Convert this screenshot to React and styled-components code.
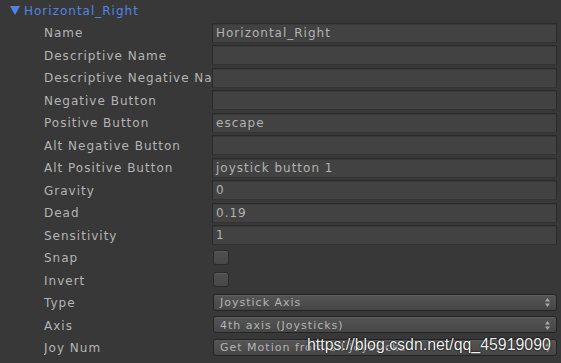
import React from 'react'
import styled, { createGlobalStyle } from 'styled-components'

const Global = createGlobalStyle`
  html, body {
    margin: 0;
    padding: 0;
    background: #383838;
  }
  body {
    font-family: "DejaVu Sans", "Liberation Sans", sans-serif;
  }
`

const Panel = styled.div`
  position: relative;
  width: 561px;
  height: 363px;
  overflow: hidden;
  background: #383838;
`

const Header = styled.div`
  height: 21px;
  display: flex;
  align-items: center;
  padding-left: 10px;
  color: #5284e6;
  font-size: 12px;
  letter-spacing: 1px;
`

const Arrow = styled.span`
  width: 0;
  height: 0;
  border-left: 5.5px solid transparent;
  border-right: 5.5px solid transparent;
  border-top: 9px solid #5284e6;
  margin-right: 4px;
`

const Row = styled.div`
  height: 22.5px;
  display: grid;
  grid-template-columns: 168px 1fr;
  align-items: center;
  padding-left: 44px;
  padding-right: 4px;
`

const Label = styled.div`
  padding-top: 2px;
  color: #b4b4b4;
  font-size: 12px;
  letter-spacing: 1px;
  white-space: nowrap;
  overflow: hidden;
`

const Field = styled.div`
  box-sizing: border-box;
  height: 20px;
  margin-top: 1px;
  background: #424242;
  border: 1px solid #2b2b2b;
  border-bottom-color: #333;
  box-shadow: inset 0 1px 0 #3a3a3a;
  color: #b2b2b2;
  font-size: 12px;
  letter-spacing: 1px;
  line-height: 19px;
  padding-left: 3px;
  white-space: nowrap;
  overflow: hidden;
`

const Check = styled.div`
  box-sizing: border-box;
  width: 16px;
  height: 15px;
  margin-left: 1px;
  border-radius: 3px;
  border: 1px solid #2a2a2a;
  background: linear-gradient(#505050, #474747);
  box-shadow: inset 0 1px 0 #5a5a5a;
`

const Select = styled.div`
  box-sizing: border-box;
  height: 17px;
  margin-left: 1px;
  display: flex;
  align-items: center;
  justify-content: space-between;
  padding: 1px 6px 0 6px;
  border-radius: 3px;
  border: 1px solid #242424;
  background: linear-gradient(#555555, #464646);
  box-shadow: inset 0 1px 0 #5e5e5e;
  color: #b4b4b4;
  font-size: 11px;
  letter-spacing: 1px;
  white-space: nowrap;
`

const Updown = styled.svg`
  flex: none;
  width: 5px;
  height: 9px;
`

const Watermark = styled.div`
  position: absolute;
  left: 307px;
  top: 336px;
  color: #f2f2f2;
  font-family: "Liberation Sans", Arial, sans-serif;
  font-size: 15.9px;
  text-shadow: 0 0 2px #000, 0 0 1px #000;
  white-space: nowrap;
`

const textRows = [
  ['Name', 'Horizontal_Right'],
  ['Descriptive Name', ''],
  ['Descriptive Negative Name', ''],
  ['Negative Button', ''],
  ['Positive Button', 'escape'],
  ['Alt Negative Button', ''],
  ['Alt Positive Button', 'joystick button 1'],
  ['Gravity', '0'],
  ['Dead', '0.19'],
  ['Sensitivity', '1'],
]

const selectRows = [
  ['Type', 'Joystick Axis'],
  ['Axis', '4th axis (Joysticks)'],
  ['Joy Num', 'Get Motion from all Joysticks'],
]

const Arrows = () => (
  <Updown viewBox="0 0 5 9">
    <path d="M2.5 0 L5 3.5 L0 3.5 Z" fill="#a8a8a8" />
    <path d="M2.5 9 L5 5.5 L0 5.5 Z" fill="#a8a8a8" />
  </Updown>
)

const App = () => {
  return (
    <>
      <Global />
      <Panel>
        <Header>
          <Arrow />
          Horizontal_Right
        </Header>
        {textRows.map(([label, value]) => (
          <Row key={label}>
            <Label>{label}</Label>
            <Field>{value}</Field>
          </Row>
        ))}
        {['Snap', 'Invert'].map((label) => (
          <Row key={label}>
            <Label>{label}</Label>
            <Check />
          </Row>
        ))}
        {selectRows.map(([label, value]) => (
          <Row key={label}>
            <Label>{label}</Label>
            <Select>
              <span>{value}</span>
              <Arrows />
            </Select>
          </Row>
        ))}
        <Watermark>https://blog.csdn.net/qq_45919090</Watermark>
      </Panel>
    </>
  )
}

export default App
